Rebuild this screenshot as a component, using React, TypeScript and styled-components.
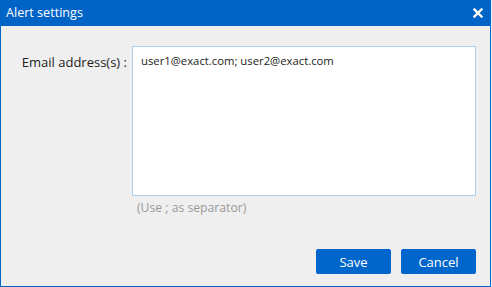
import React from "react";
import styled, { createGlobalStyle } from "styled-components";

const Global = createGlobalStyle`
  html, body { margin: 0; padding: 0; background: #f0f0f0; }
  body { font-family: "Open Sans", "Noto Sans", Arial, sans-serif; }
`;

const Window = styled.div`
  width: 491px;
  height: 287px;
  box-sizing: border-box;
  border: 1px solid #0063c6;
  border-top: none;
  background: #efefef;
  display: flex;
  flex-direction: column;
`;

const TitleBar = styled.div`
  height: 26px;
  margin: 0 -1px;
  background: #0063c6;
  color: #ffffff;
  display: flex;
  align-items: center;
  justify-content: space-between;
  padding: 0 8px 0 6px;
  font-size: 12.6px;
  flex-shrink: 0;
`;

const Title = styled.span`
  line-height: 1;
  margin-top: 1px;
`;

const CloseButton = styled.button`
  background: none;
  border: none;
  padding: 0;
  width: 10px;
  height: 10px;
  display: flex;
  cursor: pointer;
`;

const Body = styled.div`
  flex: 1;
  display: flex;
  flex-direction: column;
  padding: 20px 14px 12px 0;
`;

const FormRow = styled.div`
  display: grid;
  grid-template-columns: 131px 344px;
  align-items: start;
`;

const Label = styled.label`
  text-align: right;
  padding-right: 5px;
  padding-top: 7px;
  font-size: 13px;
  color: #222;
  white-space: nowrap;
`;

const Field = styled.div`
  display: flex;
  flex-direction: column;
`;

const TextArea = styled.textarea`
  width: 344px;
  height: 150px;
  box-sizing: border-box;
  border: 1px solid #a9d1ef;
  background: #fff;
  resize: none;
  padding: 6px 8px;
  font-family: inherit;
  font-size: 11.3px;
  color: #222;
  outline: none;
`;

const Hint = styled.div`
  margin-top: 3px;
  padding-left: 5px;
  font-size: 12.2px;
  color: #9a9a9a;
`;

const Footer = styled.div`
  margin-top: auto;
  display: flex;
  justify-content: flex-end;
  gap: 10px;
`;

const Button = styled.button`
  width: 75px;
  height: 25px;
  border: none;
  border-radius: 2px;
  background: #0066cc;
  color: #fff;
  font-family: inherit;
  font-size: 13px;
  cursor: pointer;
  padding: 0;
`;

export default function App() {
  return (
    <>
      <Global />
      <Window>
        <TitleBar>
          <Title>Alert settings</Title>
          <CloseButton aria-label="Close">
            <svg width="10" height="10" viewBox="0 0 10 10">
              <path d="M1.5 1.5 L8.5 8.5 M8.5 1.5 L1.5 8.5" stroke="#fff" strokeWidth="2.4" strokeLinecap="square" />
            </svg>
          </CloseButton>
        </TitleBar>
        <Body>
          <FormRow>
            <Label htmlFor="emails">Email address(s) :</Label>
            <Field>
              <TextArea id="emails" defaultValue="user1@exact.com; user2@exact.com" />
              <Hint>(Use ; as separator)</Hint>
            </Field>
          </FormRow>
          <Footer>
            <Button>Save</Button>
            <Button>Cancel</Button>
          </Footer>
        </Body>
      </Window>
    </>
  );
}
